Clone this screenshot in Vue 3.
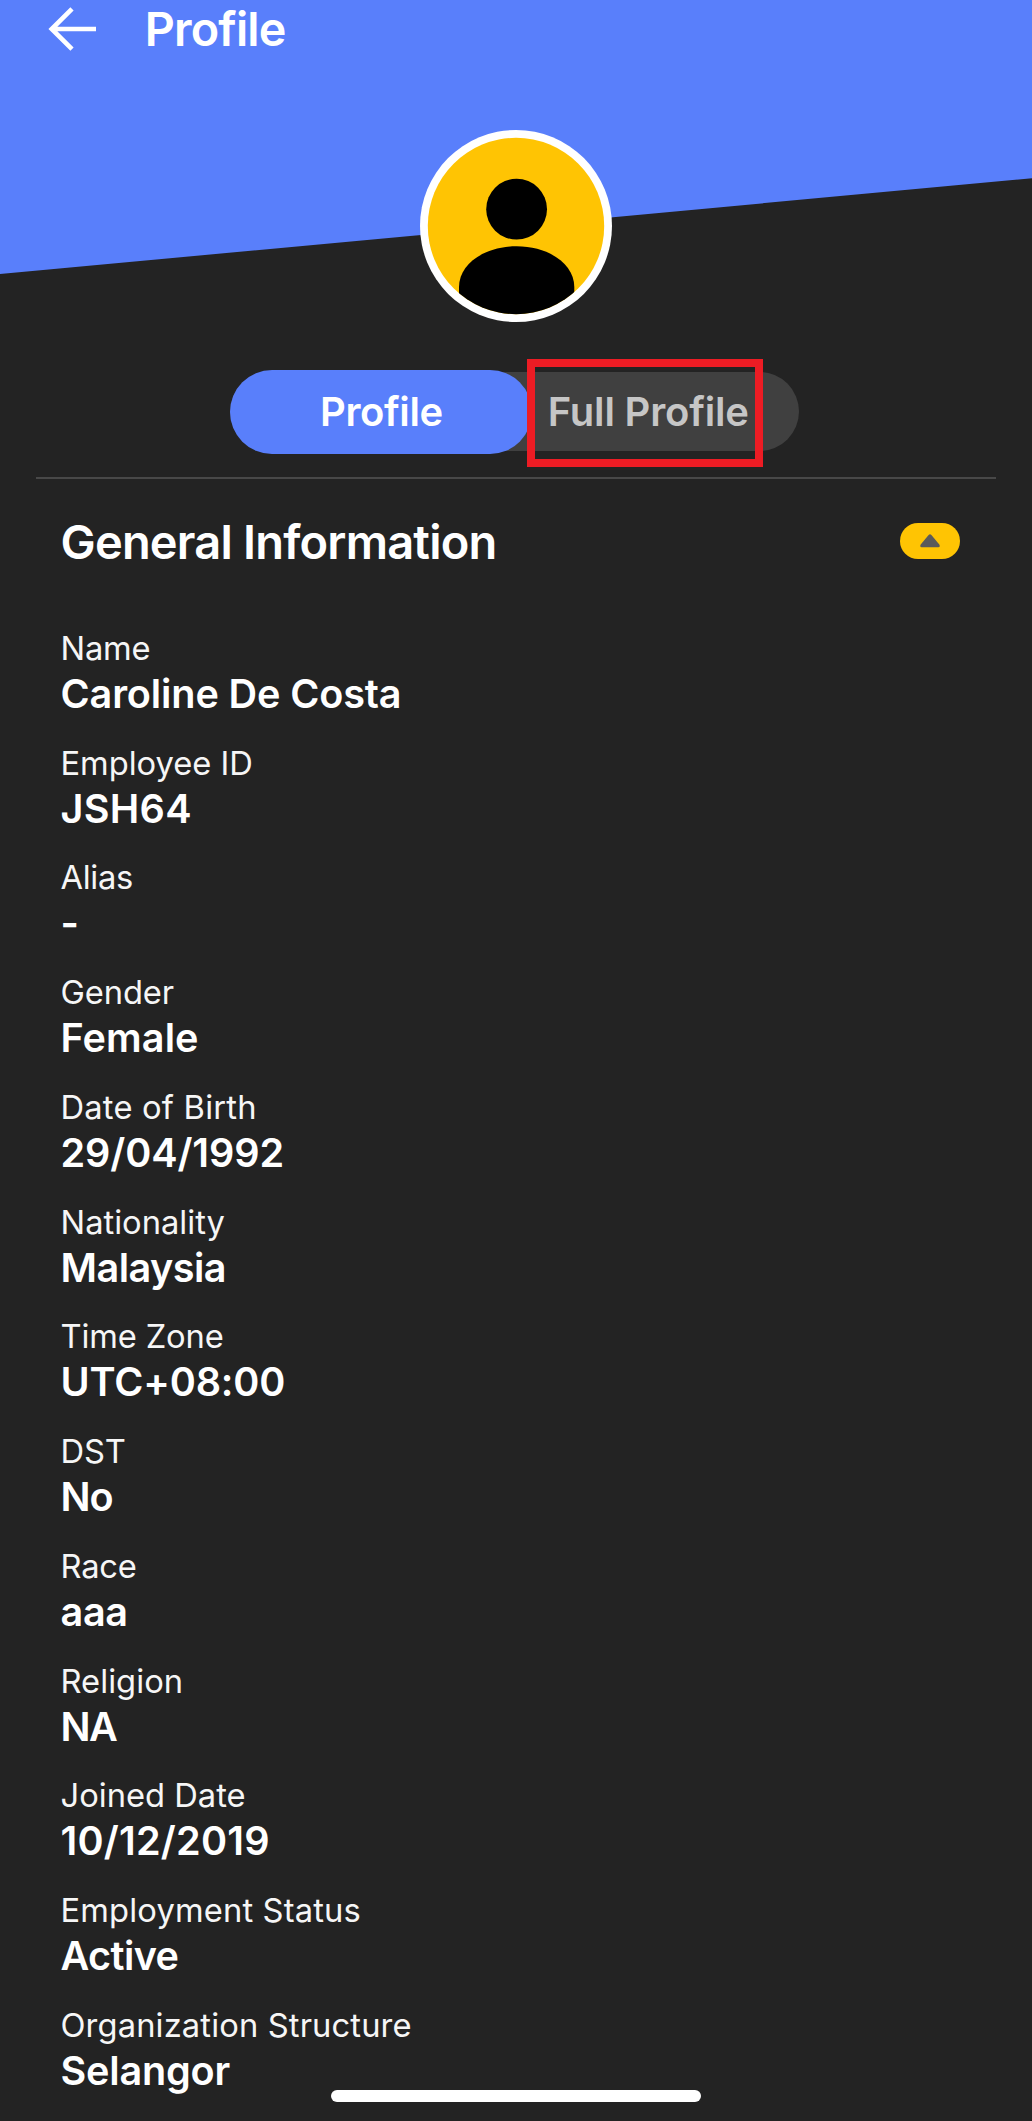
<script setup>
// lt / vt: letter tracking in px for the label and the value
const fields = [
  { label: 'Name', value: 'Caroline De Costa', lt: -0.2, vt: -0.12 },
  { label: 'Employee ID', value: 'JSH64', lt: -0.03, vt: 0.3 },
  { label: 'Alias', value: '-', lt: -0.3, vt: 0 },
  { label: 'Gender', value: 'Female', lt: -0.1, vt: 0.1 },
  { label: 'Date of Birth', value: '29/04/1992', lt: 0.2, vt: -0.1 },
  { label: 'Nationality', value: 'Malaysia', lt: 0, vt: -0.55 },
  { label: 'Time Zone', value: 'UTC+08:00', lt: -0.15, vt: -0.15 },
  { label: 'DST', value: 'No', lt: -0.2, vt: -1 },
  { label: 'Race', value: 'aaa', lt: -0.2, vt: -0.3 },
  { label: 'Religion', value: 'NA', lt: 0.04, vt: -1.5 },
  { label: 'Joined Date', value: '10/12/2019', lt: 0, vt: 0.22 },
  { label: 'Employment Status', value: 'Active', lt: 0.15, vt: -0.6 },
  { label: 'Organization Structure', value: 'Selangor', lt: 0.13, vt: -0.2 },
]
</script>

<template>
  <main class="screen">
    <header class="hero">
      <div class="bar">
        <svg class="back" width="50" height="46" viewBox="0 0 50 46" fill="none" stroke="#fff" stroke-width="4.6">
          <path d="M25 2.8 4.700 23 25 43.200M4.700 23H49" />
        </svg>
        <h1>Profile</h1>
      </div>
      <svg class="avatar" width="192" height="192" viewBox="0 0 192 192">
        <defs>
          <clipPath id="face"><circle cx="96" cy="96" r="88.2" /></clipPath>
        </defs>
        <circle cx="96" cy="96" r="96" fill="#fff" />
        <g clip-path="url(#face)">
          <rect width="192" height="192" fill="#ffc403" />
          <circle cx="96.6" cy="79.2" r="30.4" />
          <path d="M39 157C39 134 64.500 116.300 96.600 116.300S154.300 134 154.300 157V192H39Z" />
        </g>
      </svg>
    </header>

    <nav class="tabs">
      <button class="tab active">Profile</button>
      <button class="tab full">Full Profile</button>
      <span class="marker"></span>
    </nav>

    <section class="info">
      <div class="heading">
        <h2>General Information</h2>
        <button class="toggle">
          <svg width="20" height="14" viewBox="0 0 20 14" fill="#5b5a5a">
            <path d="M8.600 1Q10 -.400 11.400 1L19.300 10.500Q20.500 13.200 18.300 13.300H1.700Q-.500 13.200.700 10.500Z" />
          </svg>
        </button>
      </div>
      <dl>
        <div v-for="f in fields" :key="f.label" class="field">
          <dt :style="{ letterSpacing: f.lt + 'px' }">{{ f.label }}</dt>
          <dd :style="{ letterSpacing: f.vt + 'px' }">{{ f.value }}</dd>
        </div>
      </dl>
    </section>
    <div class="home"></div>
  </main>
</template>

<style>
body {
  background: #232323;
}
</style>

<style scoped>
.screen {
  position: relative;
  box-sizing: border-box;
  width: 1032px;
  height: 2121px;
  overflow: hidden;
  background: #232323;
  color: #fff;
  font-family: Inter, "Liberation Sans", sans-serif;
}
h1, h2, dl, dt, dd {
  margin: 0;
}
button {
  border: 0;
  padding: 0;
  margin: 0;
  font: inherit;
}
.hero {
  height: 370px;
  display: flex;
  flex-direction: column;
  align-items: center;
  position: relative;
  isolation: isolate;
}
.hero::before {
  content: "";
  position: absolute;
  z-index: -1;
  inset: 0 0 auto;
  height: 275px;
  background: #597ffb;
  clip-path: polygon(0 0, 100% 0, 100% 178.300px, 0 274px);
}
.bar {
  align-self: stretch;
  height: 57px;
  display: flex;
  align-items: center;
  padding-left: 47px;
}
.back {
  flex: none;
}
h1 {
  margin-left: 47.700px;
  font-size: 46.700px;
  font-weight: 600;
  line-height: 58px;
  letter-spacing: -0.82px;
}
.avatar {
  margin-top: 72.700px;
  flex: none;
}
.tabs {
  position: relative;
  display: flex;
  align-items: center;
  width: 569px;
  height: 79px;
  margin: 2.300px 0 0 230.300px;
  border-radius: 40px;
  background: #404040;
}
.tab {
  font-size: 40px;
  font-weight: 600;
  line-height: 80px;
  text-align: left;
}
.active {
  flex: none;
  box-sizing: border-box;
  width: 301.500px;
  height: 84px;
  padding-left: 89.700px;
  border-radius: 42px;
  background: #597ffb;
  color: #fff;
  letter-spacing: -0.4px;
}
.full {
  background: none;
  padding-left: 16px;
  color: #c6c6c6;
  letter-spacing: -0.18px;
}
.marker {
  position: absolute;
  left: 296.700px;
  top: -13.300px;
  width: 220px;
  height: 92px;
  border: 8px solid #ed1c24;
}
.info {
  margin: 25.700px 36px 0;
  border-top: 2px solid #484848;
  padding: 0 36px 0 24.500px;
}
.heading {
  display: flex;
  align-items: center;
  justify-content: space-between;
  height: 124.500px;
}
h2 {
  font-size: 47px;
  font-weight: 600;
  letter-spacing: -0.8px;
}
.toggle {
  width: 60px;
  height: 35.500px;
  display: flex;
  align-items: center;
  justify-content: center;
  border-radius: 18px;
  background: #ffc403;
}
dl {
  padding-top: 22.300px;
}
.field {
  height: 114.750px;
}
dt {
  font-size: 32.700px;
  line-height: 44px;
  color: #f6f6f6;
  white-space: nowrap;
}
dd {
  font-size: 39.600px;
  font-weight: 600;
  line-height: 48px;
  white-space: nowrap;
}
.home {
  position: absolute;
  left: 331px;
  bottom: 19px;
  width: 370px;
  height: 12.500px;
  border-radius: 7px;
  background: #fff;
}
</style>
